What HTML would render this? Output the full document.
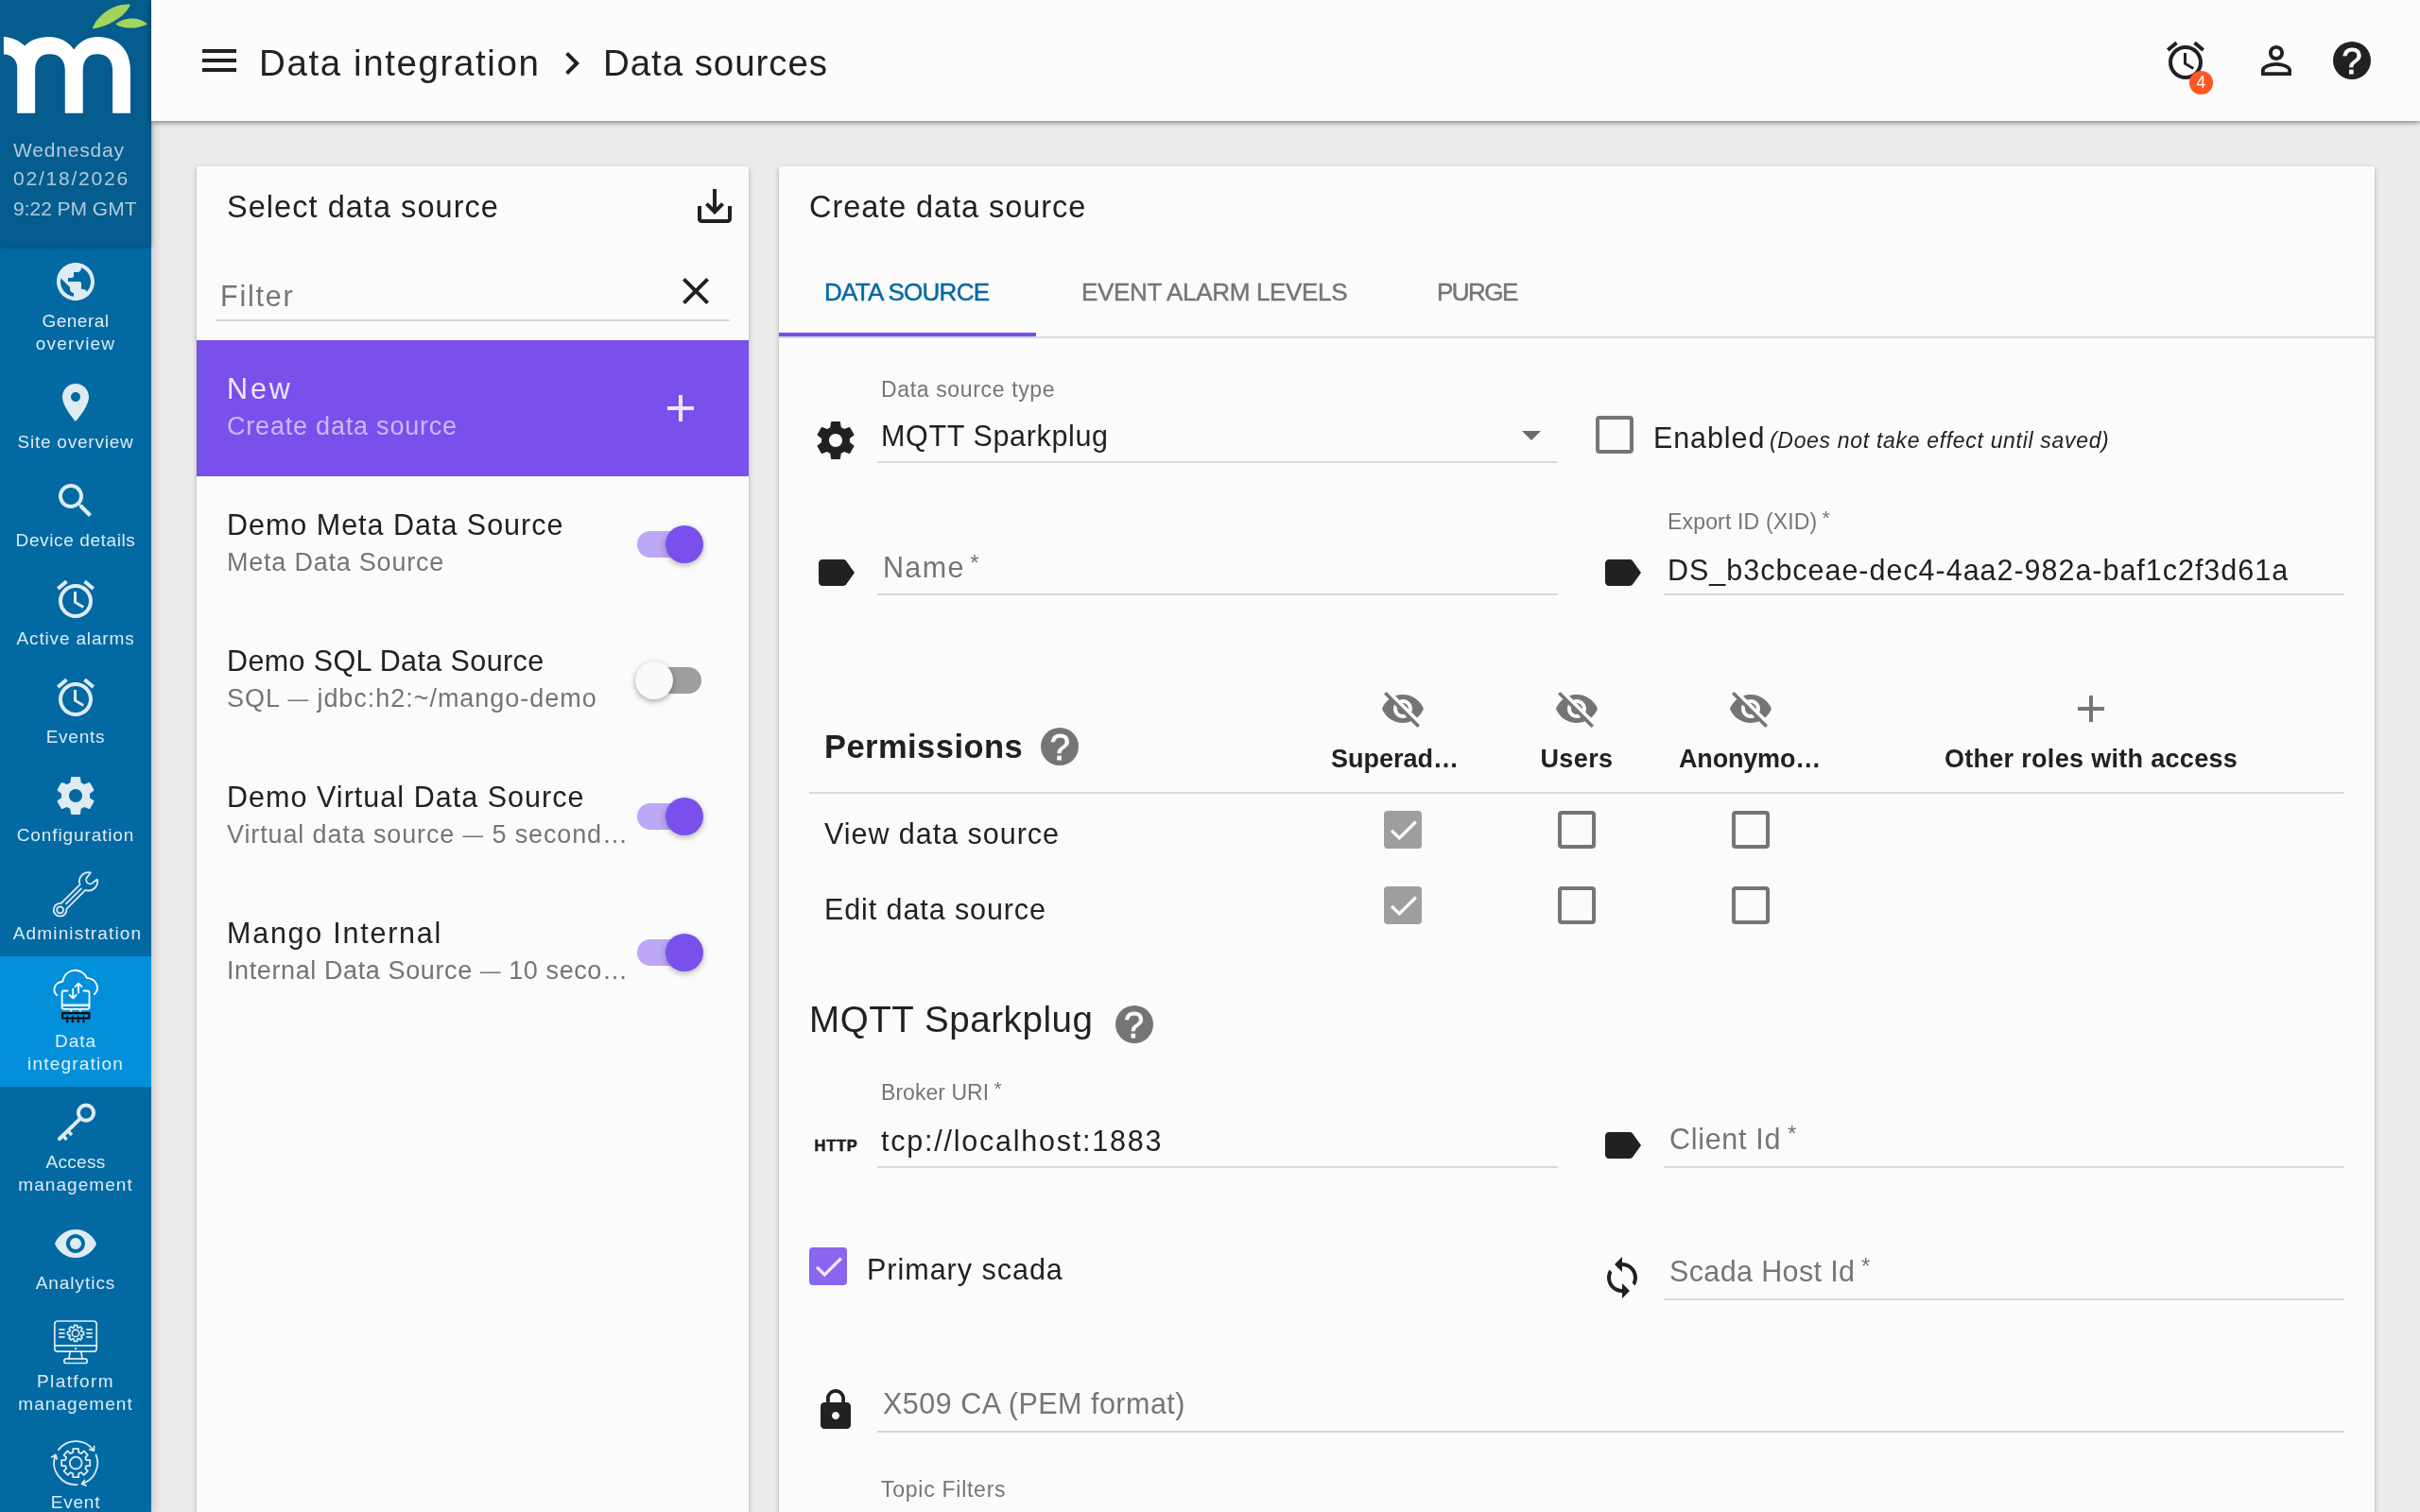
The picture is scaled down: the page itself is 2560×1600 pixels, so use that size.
<!DOCTYPE html>
<html lang="en"><head><meta charset="utf-8"><title>Data sources</title>
<style>
html,body{margin:0;padding:0;background:#ebebeb;}
body{width:2560px;height:1600px;overflow:hidden;position:relative;}
#root{position:absolute;left:0;top:0;width:2560px;height:1600px;overflow:hidden;background:#ebebeb;}
#tx{position:absolute;left:0;top:0;width:2560px;height:1600px;will-change:transform;}
.a{position:absolute;display:block;}
.t{position:absolute;white-space:nowrap;display:block;}
.tc{position:absolute;width:800px;text-align:center;white-space:nowrap;}
.tr{position:absolute;width:800px;text-align:right;white-space:nowrap;}
.tc>span,.tr>span{display:inline-block;}
.d{font-size:80%;position:relative;top:-1.5px;}
</style></head>
<body><div id="root">
<div class="a" style="left:208px;top:176px;width:584px;height:1500px;background:#fbfbfb;box-shadow:0 2px 6px rgba(0,0,0,.2),0 2px 2px rgba(0,0,0,.14),0 4px 2px -2px rgba(0,0,0,.12);"></div>
<div class="a" style="left:824px;top:176px;width:1688px;height:1500px;background:#fbfbfb;box-shadow:0 2px 6px rgba(0,0,0,.2),0 2px 2px rgba(0,0,0,.14),0 4px 2px -2px rgba(0,0,0,.12);"></div>
<svg class="a" style="left:732.0px;top:194.0px;" width="48" height="48" viewBox="0 0 24 24"><path fill="#212121" d="M19 12v7H5v-7H3v7c0 1.1.9 2 2 2h14c1.1 0 2-.9 2-2v-7h-2zm-6 .67l2.59-2.58L17 11.5l-5 5-5-5 1.41-1.41L11 12.67V3h2z"/></svg>
<div class="a" style="left:228px;top:338px;width:544px;height:2px;background:#d9d9d9;"></div>
<svg class="a" style="left:711.5px;top:284.0px;" width="48" height="48" viewBox="0 0 24 24"><path fill="#212121" d="M19 6.41L17.59 5 12 10.59 6.41 5 5 6.41 10.59 12 5 17.59 6.41 19 12 13.41 17.59 19 19 17.59 13.41 12z"/></svg>
<div class="a" style="left:208px;top:360px;width:584px;height:144px;background:#7950ec;"></div>
<svg class="a" style="left:696.0px;top:408.0px;" width="48" height="48" viewBox="0 0 24 24"><path fill="rgba(255,255,255,0.87)" d="M19 13h-6v6h-2v-6H5v-2h6V5h2v6h6v2z"/></svg>
<div class="a" style="left:674px;top:562px;width:68px;height:28px;background:#bca8f5;border-radius:14px;"></div>
<div class="a" style="left:704px;top:556px;width:40px;height:40px;background:#7950ec;border-radius:50%;box-shadow:0 2px 6px rgba(0,0,0,.3);"></div>
<div class="a" style="left:674px;top:706px;width:68px;height:28px;background:#9e9e9e;border-radius:14px;"></div>
<div class="a" style="left:672px;top:700px;width:40px;height:40px;background:#fafafa;border-radius:50%;box-shadow:0 2px 6px rgba(0,0,0,.35);"></div>
<div class="a" style="left:674px;top:850px;width:68px;height:28px;background:#bca8f5;border-radius:14px;"></div>
<div class="a" style="left:704px;top:844px;width:40px;height:40px;background:#7950ec;border-radius:50%;box-shadow:0 2px 6px rgba(0,0,0,.3);"></div>
<div class="a" style="left:674px;top:994px;width:68px;height:28px;background:#bca8f5;border-radius:14px;"></div>
<div class="a" style="left:704px;top:988px;width:40px;height:40px;background:#7950ec;border-radius:50%;box-shadow:0 2px 6px rgba(0,0,0,.3);"></div>
<div class="a" style="left:824px;top:356px;width:1688px;height:2px;background:#d9d9d9;"></div>
<div class="a" style="left:824px;top:352px;width:272px;height:4px;background:#7950ec;"></div>
<svg class="a" style="left:860.0px;top:441.5px;" width="48" height="48" viewBox="0 0 24 24"><path fill="#212121" d="M19.43 12.98c.04-.32.07-.64.07-.98s-.03-.66-.07-.98l2.11-1.65c.19-.15.24-.42.12-.64l-2-3.46c-.12-.22-.39-.3-.61-.22l-2.49 1c-.52-.4-1.08-.73-1.69-.98l-.38-2.65C14.46 2.18 14.25 2 14 2h-4c-.25 0-.46.18-.49.42l-.38 2.65c-.61.25-1.17.59-1.69.98l-2.49-1c-.23-.09-.49 0-.61.22l-2 3.46c-.13.22-.07.49.12.64l2.11 1.65c-.04.32-.07.65-.07.98s.03.66.07.98l-2.11 1.65c-.19.15-.24.42-.12.64l2 3.46c.12.22.39.3.61.22l2.49-1c.52.4 1.08.73 1.69.98l.38 2.65c.03.24.24.42.49.42h4c.25 0 .46-.18.49-.42l.38-2.65c.61-.25 1.17-.59 1.69-.98l2.49 1c.23.09.49 0 .61-.22l2-3.46c.12-.22.07-.49-.12-.64l-2.11-1.65zM12 15.5c-1.93 0-3.5-1.57-3.5-3.5s1.57-3.5 3.5-3.5 3.5 1.57 3.5 3.5-1.57 3.5-3.5 3.5z"/></svg>
<div class="a" style="left:928px;top:488px;width:720px;height:2px;background:#d9d9d9;"></div>
<svg class="a" style="left:1610px;top:456px" width="20" height="10" viewBox="0 0 20 10"><path d="M0 0h20L10 10z" fill="#6b6b6b"/></svg>
<div class="a" style="left:1688px;top:440px;width:40px;height:40px;box-sizing:border-box;border:4px solid #757575;border-radius:4px;"></div>
<svg class="a" style="left:860.0px;top:582.0px;" width="48" height="48" viewBox="0 0 24 24"><path fill="#212121" d="M17.63 5.84C17.27 5.33 16.67 5 16 5L5 5.01C3.9 5.01 3 5.9 3 7v10c0 1.1.9 1.99 2 1.99L16 19c.67 0 1.27-.33 1.63-.84L22 12l-4.37-6.16z"/></svg>
<div class="a" style="left:928px;top:628px;width:720px;height:2px;background:#d9d9d9;"></div>
<svg class="a" style="left:1692.0px;top:582.0px;" width="48" height="48" viewBox="0 0 24 24"><path fill="#212121" d="M17.63 5.84C17.27 5.33 16.67 5 16 5L5 5.01C3.9 5.01 3 5.9 3 7v10c0 1.1.9 1.99 2 1.99L16 19c.67 0 1.27-.33 1.63-.84L22 12l-4.37-6.16z"/></svg>
<div class="a" style="left:1760px;top:628px;width:720px;height:2px;background:#d9d9d9;"></div>
<div class="a" style="left:1101.3px;top:770px;width:40px;height:40px;background:#757575;border-radius:50%;"></div>
<svg class="a" style="left:1460.0px;top:726.0px;" width="48" height="48" viewBox="0 0 24 24"><path fill="#757575" d="M12 7c2.76 0 5 2.24 5 5 0 .65-.13 1.26-.36 1.83l2.92 2.92c1.51-1.26 2.7-2.89 3.43-4.75-1.73-4.39-6-7.5-11-7.5-1.4 0-2.74.25-3.98.7l2.16 2.16C10.74 7.13 11.35 7 12 7zM2 4.27l2.28 2.28.46.46C3.08 8.3 1.78 10.02 1 12c1.73 4.39 6 7.5 11 7.5 1.55 0 3.03-.3 4.38-.84l.42.42L19.73 22 21 20.73 3.27 3 2 4.27zM7.53 9.8l1.55 1.55c-.05.21-.08.43-.08.65 0 1.66 1.34 3 3 3 .22 0 .44-.03.65-.08l1.55 1.55c-.67.33-1.41.53-2.2.53-2.76 0-5-2.24-5-5 0-.79.2-1.53.53-2.2zm4.31-.78l3.15 3.15.02-.16c0-1.66-1.34-3-3-3l-.17.01z"/></svg>
<svg class="a" style="left:1644.0px;top:726.0px;" width="48" height="48" viewBox="0 0 24 24"><path fill="#757575" d="M12 7c2.76 0 5 2.24 5 5 0 .65-.13 1.26-.36 1.83l2.92 2.92c1.51-1.26 2.7-2.89 3.43-4.75-1.73-4.39-6-7.5-11-7.5-1.4 0-2.74.25-3.98.7l2.16 2.16C10.74 7.13 11.35 7 12 7zM2 4.27l2.28 2.28.46.46C3.08 8.3 1.78 10.02 1 12c1.73 4.39 6 7.5 11 7.5 1.55 0 3.03-.3 4.38-.84l.42.42L19.73 22 21 20.73 3.27 3 2 4.27zM7.53 9.8l1.55 1.55c-.05.21-.08.43-.08.65 0 1.66 1.34 3 3 3 .22 0 .44-.03.65-.08l1.55 1.55c-.67.33-1.41.53-2.2.53-2.76 0-5-2.24-5-5 0-.79.2-1.53.53-2.2zm4.31-.78l3.15 3.15.02-.16c0-1.66-1.34-3-3-3l-.17.01z"/></svg>
<svg class="a" style="left:1828.0px;top:726.0px;" width="48" height="48" viewBox="0 0 24 24"><path fill="#757575" d="M12 7c2.76 0 5 2.24 5 5 0 .65-.13 1.26-.36 1.83l2.92 2.92c1.51-1.26 2.7-2.89 3.43-4.75-1.73-4.39-6-7.5-11-7.5-1.4 0-2.74.25-3.98.7l2.16 2.16C10.74 7.13 11.35 7 12 7zM2 4.27l2.28 2.28.46.46C3.08 8.3 1.78 10.02 1 12c1.73 4.39 6 7.5 11 7.5 1.55 0 3.03-.3 4.38-.84l.42.42L19.73 22 21 20.73 3.27 3 2 4.27zM7.53 9.8l1.55 1.55c-.05.21-.08.43-.08.65 0 1.66 1.34 3 3 3 .22 0 .44-.03.65-.08l1.55 1.55c-.67.33-1.41.53-2.2.53-2.76 0-5-2.24-5-5 0-.79.2-1.53.53-2.2zm4.31-.78l3.15 3.15.02-.16c0-1.66-1.34-3-3-3l-.17.01z"/></svg>
<svg class="a" style="left:2188.0px;top:726.0px;" width="48" height="48" viewBox="0 0 24 24"><path fill="#757575" d="M19 13h-6v6h-2v-6H5v-2h6V5h2v6h6v2z"/></svg>
<div class="a" style="left:856px;top:838px;width:1624px;height:2px;background:#d9d9d9;"></div>
<div class="a" style="left:1464px;top:858px;width:40px;height:40px;background:#9e9e9e;border-radius:4px;"></div>
<svg class="a" style="left:1464px;top:858px" width="40" height="40" viewBox="0 0 40 40"><path d="M8.1 20.8L16.3 29L33.8 11.5" fill="none" stroke="#fbfbfb" stroke-width="3.3" stroke-linejoin="miter"/></svg>
<div class="a" style="left:1648px;top:858px;width:40px;height:40px;box-sizing:border-box;border:4px solid #757575;border-radius:4px;"></div>
<div class="a" style="left:1832px;top:858px;width:40px;height:40px;box-sizing:border-box;border:4px solid #757575;border-radius:4px;"></div>
<div class="a" style="left:1464px;top:938px;width:40px;height:40px;background:#9e9e9e;border-radius:4px;"></div>
<svg class="a" style="left:1464px;top:938px" width="40" height="40" viewBox="0 0 40 40"><path d="M8.1 20.8L16.3 29L33.8 11.5" fill="none" stroke="#fbfbfb" stroke-width="3.3" stroke-linejoin="miter"/></svg>
<div class="a" style="left:1648px;top:938px;width:40px;height:40px;box-sizing:border-box;border:4px solid #757575;border-radius:4px;"></div>
<div class="a" style="left:1832px;top:938px;width:40px;height:40px;box-sizing:border-box;border:4px solid #757575;border-radius:4px;"></div>
<div class="a" style="left:1179.5px;top:1064px;width:40px;height:40px;background:#757575;border-radius:50%;"></div>
<div class="a" style="left:928px;top:1234px;width:720px;height:2px;background:#d9d9d9;"></div>
<svg class="a" style="left:1692.0px;top:1188.0px;" width="48" height="48" viewBox="0 0 24 24"><path fill="#212121" d="M17.63 5.84C17.27 5.33 16.67 5 16 5L5 5.01C3.9 5.01 3 5.9 3 7v10c0 1.1.9 1.99 2 1.99L16 19c.67 0 1.27-.33 1.63-.84L22 12l-4.37-6.16z"/></svg>
<div class="a" style="left:1760px;top:1234px;width:720px;height:2px;background:#d9d9d9;"></div>
<div class="a" style="left:856px;top:1320px;width:40px;height:40px;background:#8a66ee;border-radius:4px;"></div>
<svg class="a" style="left:856px;top:1320px" width="40" height="40" viewBox="0 0 40 40"><path d="M8.1 20.8L16.3 29L33.8 11.5" fill="none" stroke="#ede6fc" stroke-width="3.3" stroke-linejoin="miter"/></svg>
<svg class="a" style="left:1692.0px;top:1328.0px;" width="48" height="48" viewBox="0 0 24 24"><path fill="#212121" d="M12 4V1L8 5l4 4V6c3.31 0 6 2.69 6 6 0 1.01-.25 1.97-.7 2.8l1.46 1.46C19.54 15.03 20 13.57 20 12c0-4.42-3.58-8-8-8zm0 14c-3.31 0-6-2.69-6-6 0-1.01.25-1.97.7-2.8L5.24 7.74C4.46 8.97 4 10.43 4 12c0 4.42 3.58 8 8 8v3l4-4-4-4v3z"/></svg>
<div class="a" style="left:1760px;top:1374px;width:720px;height:2px;background:#d9d9d9;"></div>
<svg class="a" style="left:860.0px;top:1468.0px;" width="48" height="48" viewBox="0 0 24 24"><path fill="#212121" d="M18 8h-1V6c0-2.76-2.24-5-5-5S7 3.24 7 6v2H6c-1.1 0-2 .9-2 2v10c0 1.1.9 2 2 2h12c1.1 0 2-.9 2-2V10c0-1.1-.9-2-2-2zm-6 9c-1.1 0-2-.9-2-2s.9-2 2-2 2 .9 2 2-.9 2-2 2zm3.1-9H8.9V6c0-1.71 1.39-3.1 3.1-3.1 1.71 0 3.1 1.39 3.1 3.1v2z"/></svg>
<div class="a" style="left:928px;top:1514px;width:1552px;height:2px;background:#d9d9d9;"></div>
<div class="a" style="left:0px;top:0px;width:160px;height:1600px;background:#0269a3;box-shadow:0 0 10px rgba(0,0,0,.25);"></div>
<div class="a" style="left:0px;top:1012px;width:160px;height:138px;background:#0390da;"></div>
<div class="a" style="left:0px;top:0px;width:160px;height:260px;background:#055c8e;box-shadow:0 1px 4px rgba(0,0,0,.3);"></div>
<svg class="a" style="left:0;top:0" width="160" height="130" viewBox="0 0 160 130">
<path fill="#fff" d="M3.9 39.1C13 39.5 21 43.5 26.2 48.6C32 42.5 41 39.1 51.6 39.1C63 39.1 72.5 44 78.2 52.5C84 44 93 39.1 103.2 39.1C125 39.1 138 53 138 75L138 119.7L119.1 119.7L119.1 75C119.1 63 113 57.2 102.8 57.2C93 57.2 87.7 63 87.7 75L87.7 119.7L68.8 119.7L68.8 75C68.8 63 63 57.2 52.5 57.2C42.5 57.2 37.1 63 37.1 75L37.1 119.7L18.2 119.7L18.2 72C18.2 63 12 57.8 3.9 57.6Z"/>
<path fill="#a4d45d" d="M97.6 30.5C103 16 120 3.5 138 4.7C133 17 115 28 97.6 30.5Z"/>
<path fill="#a4d45d" d="M122.1 25.4C131 18.5 146 16.5 156 25.4C146 30.5 132 31.5 122.1 25.4Z"/>
</svg>
<svg class="a" style="left:56.0px;top:274.0px;" width="48" height="48" viewBox="0 0 24 24"><path fill="rgba(255,255,255,0.87)" d="M12 2C6.48 2 2 6.48 2 12s4.48 10 10 10 10-4.48 10-10S17.52 2 12 2zm-1 17.93c-3.95-.49-7-3.85-7-7.93 0-.62.08-1.21.21-1.79L9 15v1c0 1.1.9 2 2 2v1.93zm6.9-2.54c-.26-.81-1-1.39-1.9-1.39h-1v-3c0-.55-.45-1-1-1H8v-2h2c.55 0 1-.45 1-1V7h2c1.1 0 2-.9 2-2v-.41c2.93 1.19 5 4.06 5 7.41 0 2.08-.8 3.97-2.1 5.39z"/></svg>
<svg class="a" style="left:56.0px;top:402.0px;" width="48" height="48" viewBox="0 0 24 24"><path fill="rgba(255,255,255,0.87)" d="M12 2C8.13 2 5 5.13 5 9c0 5.25 7 13 7 13s7-7.75 7-13c0-3.87-3.13-7-7-7zm0 9.5c-1.38 0-2.5-1.12-2.5-2.5s1.12-2.5 2.5-2.5 2.5 1.12 2.5 2.5-1.12 2.5-2.5 2.5z"/></svg>
<svg class="a" style="left:56.0px;top:506.0px;" width="48" height="48" viewBox="0 0 24 24"><path fill="rgba(255,255,255,0.87)" d="M15.5 14h-.79l-.28-.27C15.41 12.59 16 11.11 16 9.5 16 5.91 13.09 3 9.5 3S3 5.91 3 9.5 5.91 16 9.5 16c1.61 0 3.09-.59 4.23-1.57l.27.28v.79l5 4.99L20.49 19l-4.99-5zm-6 0C7.01 14 5 11.99 5 9.5S7.01 5 9.5 5 14 7.01 14 9.5 11.99 14 9.5 14z"/></svg>
<svg class="a" style="left:56.0px;top:610.0px;" width="48" height="48" viewBox="0 0 24 24"><path fill="rgba(255,255,255,0.87)" d="M22 5.72l-4.6-3.86-1.29 1.53 4.6 3.86L22 5.72zM7.88 3.39L6.6 1.86 2 5.71l1.29 1.53 4.59-3.85zM12.5 8H11v6l4.75 2.85.75-1.23-4-2.37V8zM12 4c-4.97 0-9 4.03-9 9s4.02 9 9 9c4.97 0 9-4.03 9-9s-4.03-9-9-9zm0 16c-3.87 0-7-3.13-7-7s3.13-7 7-7 7 3.13 7 7-3.13 7-7 7z"/></svg>
<svg class="a" style="left:56.0px;top:714.0px;" width="48" height="48" viewBox="0 0 24 24"><path fill="rgba(255,255,255,0.87)" d="M22 5.72l-4.6-3.86-1.29 1.53 4.6 3.86L22 5.72zM7.88 3.39L6.6 1.86 2 5.71l1.29 1.53 4.59-3.85zM12.5 8H11v6l4.75 2.85.75-1.23-4-2.37V8zM12 4c-4.97 0-9 4.03-9 9s4.02 9 9 9c4.97 0 9-4.03 9-9s-4.03-9-9-9zm0 16c-3.87 0-7-3.13-7-7s3.13-7 7-7 7 3.13 7 7-3.13 7-7 7z"/></svg>
<svg class="a" style="left:56.0px;top:818.0px;" width="48" height="48" viewBox="0 0 24 24"><path fill="rgba(255,255,255,0.87)" d="M19.43 12.98c.04-.32.07-.64.07-.98s-.03-.66-.07-.98l2.11-1.65c.19-.15.24-.42.12-.64l-2-3.46c-.12-.22-.39-.3-.61-.22l-2.49 1c-.52-.4-1.08-.73-1.69-.98l-.38-2.65C14.46 2.18 14.25 2 14 2h-4c-.25 0-.46.18-.49.42l-.38 2.65c-.61.25-1.17.59-1.69.98l-2.49-1c-.23-.09-.49 0-.61.22l-2 3.46c-.13.22-.07.49.12.64l2.11 1.65c-.04.32-.07.65-.07.98s.03.66.07.98l-2.11 1.65c-.19.15-.24.42-.12.64l2 3.46c.12.22.39.3.61.22l2.49-1c.52.4 1.08.73 1.69.98l.38 2.65c.03.24.24.42.49.42h4c.25 0 .46-.18.49-.42l.38-2.65c.61-.25 1.17-.59 1.69-.98l2.49 1c.23.09.49 0 .61-.22l2-3.46c.12-.22.07-.49-.12-.64l-2.11-1.65zM12 15.5c-1.93 0-3.5-1.57-3.5-3.5s1.57-3.5 3.5-3.5 3.5 1.57 3.5 3.5-1.57 3.5-3.5 3.5z"/></svg>
<svg class="a" style="left:56.0px;top:1292.0px;" width="48" height="48" viewBox="0 0 24 24"><path fill="rgba(255,255,255,0.87)" d="M12 4.5C7 4.5 2.73 7.61 1 12c1.73 4.39 6 7.5 11 7.5s9.27-3.11 11-7.5c-1.73-4.39-6-7.5-11-7.5zM12 17c-2.76 0-5-2.24-5-5s2.24-5 5-5 5 2.24 5 5-2.24 5-5 5zm0-8c-1.66 0-3 1.34-3 3s1.34 3 3 3 3-1.34 3-3-1.34-3-3-3z"/></svg>
<svg class="a" style="left:0;top:900px" width="160" height="100" viewBox="0 900 160 100"><g transform="translate(63.6 962.8) rotate(-45)" fill="none" stroke="rgba(255,255,255,0.87)" stroke-width="1.8" stroke-linejoin="round" stroke-linecap="round"><path d="M50.599999999999994 -5 A9.6 9.6 0 0 0 33.7 -4.1 L5.55 -4.1 A6.9 6.9 0 1 0 5.55 4.1 L33.7 4.1 A9.6 9.6 0 0 0 50.599999999999994 5 L44.9 4.2 A4.2 4.2 0 0 1 44.9 -4.2 Z"/><circle r="3.5"/><path d="M9 0L31.6 0"/></g></svg>
<svg class="a" style="left:40px;top:1016px" width="80" height="76" viewBox="0 0 80 76"><g fill="none" stroke="#fff" stroke-width="1.8" stroke-linecap="round" stroke-linejoin="round">
<path d="M20.1 37.2C15.5 33 16.5 24 26.3 22.6C29 7.5 47 7.5 51.8 18.8C62 19.5 66.5 30 59.8 36"/>
<path d="M31.5 32.5H27.5A2 2 0 0 0 25.6 34.5V49.8A2 2 0 0 0 27.6 51.8H52.5A2 2 0 0 0 54.5 49.8V34.5A2 2 0 0 0 52.5 32.5H48.4"/>
<path d="M26 47.8H54" stroke-width="2.4"/>
<path d="M37.2 30.4V40M33.8 37L37.2 40.4L40.6 37M43 34.6V25M39.6 28L43 24.6L46.4 28"/>
<path d="M36.2 52L34.8 54.2M43.8 52L45.2 54.2" stroke-width="1.4"/>
</g><g fill="none" stroke="#0b0b0b" stroke-width="2.2" stroke-linejoin="round">
<rect x="26.1" y="56.1" width="28.3" height="5.4"/>
<path d="M31.2 58.5V63.5M36.9 58.5V63.5M42.7 58.5V63.5M48.5 58.5V63.5" stroke-width="1.2"/>
</g><g fill="#0b0b0b"><circle cx="31.2" cy="64.8" r="1.5"/><circle cx="36.9" cy="64.8" r="1.5"/><circle cx="42.7" cy="64.8" r="1.5"/><circle cx="48.5" cy="64.8" r="1.5"/></g></svg>
<svg class="a" style="left:40px;top:1156px" width="80" height="60" viewBox="0 0 80 60"><g fill="none" stroke="#deebf3" stroke-width="4" stroke-linecap="round">
<circle cx="51" cy="21.6" r="8.1"/><path d="M45.2 27.4L22.8 49.2"/><path d="M32.5 41.5L36 45M27.3 46.6L30.6 50" stroke-width="3.4" stroke-linecap="butt"/></g></svg>
<svg class="a" style="left:40px;top:1386px" width="80" height="66" viewBox="0 0 80 66"><g fill="none" stroke="rgba(255,255,255,0.87)" stroke-width="1.7" stroke-linecap="round" stroke-linejoin="round">
<rect x="17.8" y="12" width="44.4" height="32.2" rx="3.2"/>
<path d="M18 37.8H62"/>
<path d="M34.2 44.4L32.9 51.6M45.8 44.4L47.1 51.6"/>
<rect x="27.8" y="51.8" width="24.4" height="4.7" rx="2.35"/>
<path d="M22.2 20.9H28.6M22.2 24.9H28.6M22.2 28.9H28.6M51.3 20.9H57.7M51.3 24.9H57.7M51.3 28.9H57.7" stroke-width="1.9" stroke-linecap="butt"/>
<circle cx="40" cy="24.9" r="3.7"/>
<path d="M38.10 18.68 L38.51 16.43 L41.49 16.43 L41.90 18.68 L43.05 19.16 L44.93 17.86 L47.04 19.97 L45.74 21.85 L46.22 23.00 L48.47 23.41 L48.47 26.39 L46.22 26.80 L45.74 27.95 L47.04 29.83 L44.93 31.94 L43.05 30.64 L41.90 31.12 L41.49 33.37 L38.51 33.37 L38.10 31.12 L36.95 30.64 L35.07 31.94 L32.96 29.83 L34.26 27.95 L33.78 26.80 L31.53 26.39 L31.53 23.41 L33.78 23.00 L34.26 21.85 L32.96 19.97 L35.07 17.86 L36.95 19.16Z"/>
</g><rect x="39" y="40" width="2" height="2" fill="rgba(255,255,255,0.87)"/></svg>
<svg class="a" style="left:40px;top:1514px" width="80" height="66" viewBox="0 0 80 66"><g fill="none" stroke="rgba(255,255,255,0.87)" stroke-width="1.8" stroke-linecap="round" stroke-linejoin="round">
<circle cx="40.2" cy="34.1" r="6.4"/>
<path d="M37.20 22.90 L37.28 19.08 L43.12 19.08 L43.20 22.90 L46.00 24.05 L48.76 21.42 L52.88 25.54 L50.25 28.30 L51.40 31.10 L55.22 31.18 L55.22 37.02 L51.40 37.10 L50.25 39.90 L52.88 42.66 L48.76 46.78 L46.00 44.15 L43.20 45.30 L43.12 49.12 L37.28 49.12 L37.20 45.30 L34.40 44.15 L31.64 46.78 L27.52 42.66 L30.15 39.90 L29.00 37.10 L25.18 37.02 L25.18 31.18 L29.00 31.10 L30.15 28.30 L27.52 25.54 L31.64 21.42 L34.40 24.05Z"/>
<path d="M21.90 20.16 A23 23 0 0 1 59.27 21.24 M59.27 21.24 L59.59 16.65 M59.27 21.24 L54.89 19.82 M61.53 25.48 A23 23 0 0 1 46.54 56.21 M46.54 56.21 L50.80 57.93 M46.54 56.21 L49.24 52.49 M41.80 57.04 A23 23 0 0 1 18.87 25.48 M18.87 25.48 L14.89 27.78 M18.87 25.48 L20.14 29.91"/>
</g></svg>
<div class="a" style="left:160px;top:0px;width:2400px;height:128px;background:#fcfcfc;box-shadow:0 1px 6px rgba(0,0,0,.55);"></div>
<svg class="a" style="left:208.0px;top:40.0px;" width="48" height="48" viewBox="0 0 24 24"><path fill="#212121" d="M3 18h18v-2H3v2zm0-5h18v-2H3v2zm0-7v2h18V6H3z"/></svg>
<svg class="a" style="left:581.0px;top:43.0px;" width="48" height="48" viewBox="0 0 24 24"><path fill="#212121" d="M10 6L8.59 7.41 13.17 12l-4.58 4.59L10 18l6-6z"/></svg>
<svg class="a" style="left:2288.0px;top:40.0px;" width="48" height="48" viewBox="0 0 24 24"><path fill="#212121" d="M22 5.72l-4.6-3.86-1.29 1.53 4.6 3.86L22 5.72zM7.88 3.39L6.6 1.86 2 5.71l1.29 1.53 4.59-3.85zM12.5 8H11v6l4.75 2.85.75-1.23-4-2.37V8zM12 4c-4.97 0-9 4.03-9 9s4.02 9 9 9c4.97 0 9-4.03 9-9s-4.03-9-9-9zm0 16c-3.87 0-7-3.13-7-7s3.13-7 7-7 7 3.13 7 7-3.13 7-7 7z"/></svg>
<div class="a" style="left:2316px;top:75px;width:24.5px;height:24.5px;background:#ff5722;border-radius:50%;"></div>
<svg class="a" style="left:2384.0px;top:40.0px;" width="48" height="48" viewBox="0 0 24 24"><path fill="#212121" d="M12 5.9c1.16 0 2.1.94 2.1 2.1s-.94 2.1-2.1 2.1S9.9 9.16 9.9 8s.94-2.1 2.1-2.1m0 9c2.97 0 6.1 1.46 6.1 2.1v1.1H5.9V17c0-.64 3.13-2.1 6.1-2.1M12 4C9.79 4 8 5.79 8 8s1.79 4 4 4 4-1.79 4-4-1.79-4-4-4zm0 9c-2.67 0-8 1.34-8 4v3h16v-3c0-2.66-5.33-4-8-4z"/></svg>
<div class="a" style="left:2468px;top:44px;width:40px;height:40px;background:#212121;border-radius:50%;"></div>
<div id="tx">
<span class="t" id="t1" style="left:240px;top:197.50px;font-family:'Liberation Sans',sans-serif;font-size:32.5px;line-height:43px;color:#212121;font-weight:400;letter-spacing:1.039px;">Select data source</span>
<span class="t" id="t2" style="left:233px;top:293.00px;font-family:'Liberation Sans',sans-serif;font-size:30.5px;line-height:40px;color:#757575;font-weight:400;letter-spacing:1.781px;">Filter</span>
<span class="t" id="t3" style="left:240px;top:391.00px;font-family:'Liberation Sans',sans-serif;font-size:30.5px;line-height:40px;color:rgba(255,255,255,0.87);font-weight:400;letter-spacing:2.871px;">New</span>
<span class="t" id="t4" style="left:240px;top:433.00px;font-family:'Liberation Sans',sans-serif;font-size:27.0px;line-height:36px;color:rgba(255,255,255,0.6);font-weight:400;letter-spacing:0.792px;">Create data source</span>
<span class="t" id="t5" style="left:240px;top:535.00px;font-family:'Liberation Sans',sans-serif;font-size:30.5px;line-height:40px;color:#212121;font-weight:400;letter-spacing:0.987px;">Demo Meta Data Source</span>
<span class="t" id="t6" style="left:240px;top:577.00px;font-family:'Liberation Sans',sans-serif;font-size:27.0px;line-height:36px;color:#757575;font-weight:400;letter-spacing:0.777px;">Meta Data Source</span>
<span class="t" id="t7" style="left:240px;top:679.00px;font-family:'Liberation Sans',sans-serif;font-size:30.5px;line-height:40px;color:#212121;font-weight:400;letter-spacing:0.389px;">Demo SQL Data Source</span>
<span class="t" id="t8" style="left:240px;top:721.00px;font-family:'Liberation Sans',sans-serif;font-size:27.0px;line-height:36px;color:#757575;font-weight:400;letter-spacing:0.965px;">SQL <span class="d">—</span> jdbc:h2:~/mango-demo</span>
<span class="t" id="t9" style="left:240px;top:823.00px;font-family:'Liberation Sans',sans-serif;font-size:30.5px;line-height:40px;color:#212121;font-weight:400;letter-spacing:1.034px;">Demo Virtual Data Source</span>
<span class="t" id="t10" style="left:240px;top:865.00px;font-family:'Liberation Sans',sans-serif;font-size:27.0px;line-height:36px;color:#757575;font-weight:400;letter-spacing:0.872px;">Virtual data source <span class="d">—</span> 5 second…</span>
<span class="t" id="t11" style="left:240px;top:967.00px;font-family:'Liberation Sans',sans-serif;font-size:30.5px;line-height:40px;color:#212121;font-weight:400;letter-spacing:1.754px;">Mango Internal</span>
<span class="t" id="t12" style="left:240px;top:1009.00px;font-family:'Liberation Sans',sans-serif;font-size:27.0px;line-height:36px;color:#757575;font-weight:400;letter-spacing:0.606px;">Internal Data Source <span class="d">—</span> 10 seco…</span>
<span class="t" id="t13" style="left:856px;top:197.50px;font-family:'Liberation Sans',sans-serif;font-size:32.5px;line-height:43px;color:#212121;font-weight:400;letter-spacing:0.934px;">Create data source</span>
<span class="t" id="t14" style="left:872px;top:291.50px;font-family:'Liberation Sans',sans-serif;font-size:26.0px;line-height:34px;color:#0269a3;font-weight:500;letter-spacing:-0.750px;-webkit-text-stroke:0.45px #0269a3;">DATA SOURCE</span>
<span class="t" id="t15" style="left:1144px;top:291.50px;font-family:'Liberation Sans',sans-serif;font-size:26.0px;line-height:34px;color:#757575;font-weight:500;letter-spacing:-0.325px;-webkit-text-stroke:0.45px #757575;">EVENT ALARM LEVELS</span>
<span class="t" id="t16" style="left:1520px;top:291.50px;font-family:'Liberation Sans',sans-serif;font-size:26.0px;line-height:34px;color:#757575;font-weight:500;letter-spacing:-1.539px;-webkit-text-stroke:0.45px #757575;">PURGE</span>
<span class="t" id="t17" style="left:932px;top:397.00px;font-family:'Liberation Sans',sans-serif;font-size:23.0px;line-height:30px;color:#757575;font-weight:400;letter-spacing:0.649px;">Data source type</span>
<span class="t" id="t18" style="left:932px;top:440.50px;font-family:'Liberation Sans',sans-serif;font-size:30.5px;line-height:40px;color:#212121;font-weight:400;letter-spacing:0.639px;">MQTT Sparkplug</span>
<span class="t" id="t19" style="left:1749px;top:443.00px;font-family:'Liberation Sans',sans-serif;font-size:30.5px;line-height:40px;color:#212121;font-weight:400;letter-spacing:0.904px;">Enabled</span>
<span class="t" id="t20" style="left:1872px;top:451.00px;font-family:'Liberation Sans',sans-serif;font-size:23.0px;line-height:30px;color:#212121;font-weight:400;letter-spacing:0.683px;font-style:italic;">(Does not take effect until saved)</span>
<span class="t" id="t21" style="left:934px;top:580.00px;font-family:'Liberation Sans',sans-serif;font-size:30.5px;line-height:40px;color:#757575;font-weight:400;letter-spacing:1.333px;">Name</span>
<span class="t" id="t22" style="left:1026.3px;top:580.30px;font-family:'Liberation Sans',sans-serif;font-size:24.0px;line-height:32px;color:#757575;font-weight:400;letter-spacing:0.000px;">*</span>
<span class="t" id="t23" style="left:1764px;top:536.50px;font-family:'Liberation Sans',sans-serif;font-size:23.0px;line-height:30px;color:#757575;font-weight:400;letter-spacing:0.167px;">Export ID (XID)</span>
<span class="t" id="t24" style="left:1927.4px;top:534.00px;font-family:'Liberation Sans',sans-serif;font-size:21.0px;line-height:28px;color:#757575;font-weight:400;letter-spacing:0.000px;">*</span>
<span class="t" id="t25" style="left:1764px;top:582.50px;font-family:'Liberation Sans',sans-serif;font-size:30.5px;line-height:40px;color:#212121;font-weight:400;letter-spacing:0.978px;">DS_b3cbceae-dec4-4aa2-982a-baf1c2f3d61a</span>
<span class="t" id="t26" style="left:872px;top:767.50px;font-family:'Liberation Sans',sans-serif;font-size:34.5px;line-height:45px;color:#212121;font-weight:700;letter-spacing:0.445px;">Permissions</span>
<div class="tc" style="left:721.3px;top:765.20px;"><span id="t27" style="font-family:'Liberation Sans',sans-serif;font-size:38.5px;line-height:51px;color:#fbfbfb;font-weight:400;letter-spacing:0.000px;-webkit-text-stroke:0.8px #fbfbfb;">?</span></div>
<span class="t" id="t28" style="left:1408px;top:784.50px;font-family:'Liberation Sans',sans-serif;font-size:27.0px;line-height:36px;color:#212121;font-weight:700;letter-spacing:-0.013px;">Superad…</span>
<span class="t" id="t29" style="left:1776px;top:784.50px;font-family:'Liberation Sans',sans-serif;font-size:27.0px;line-height:36px;color:#212121;font-weight:700;letter-spacing:-0.174px;">Anonymo…</span>
<div class="tc" style="left:1268px;top:784.50px;"><span id="t30" style="font-family:'Liberation Sans',sans-serif;font-size:27.0px;line-height:36px;color:#212121;font-weight:700;letter-spacing:0.410px;">Users</span></div>
<div class="tc" style="left:1812px;top:784.50px;"><span id="t31" style="font-family:'Liberation Sans',sans-serif;font-size:27.0px;line-height:36px;color:#212121;font-weight:700;letter-spacing:0.308px;">Other roles with access</span></div>
<span class="t" id="t32" style="left:872px;top:862.00px;font-family:'Liberation Sans',sans-serif;font-size:30.5px;line-height:40px;color:#212121;font-weight:400;letter-spacing:0.968px;">View data source</span>
<span class="t" id="t33" style="left:872px;top:942.00px;font-family:'Liberation Sans',sans-serif;font-size:30.5px;line-height:40px;color:#212121;font-weight:400;letter-spacing:0.905px;">Edit data source</span>
<span class="t" id="t34" style="left:856px;top:1053.00px;font-family:'Liberation Sans',sans-serif;font-size:38.5px;line-height:51px;color:#212121;font-weight:400;letter-spacing:0.581px;">MQTT Sparkplug</span>
<div class="tc" style="left:799.5px;top:1059.20px;"><span id="t35" style="font-family:'Liberation Sans',sans-serif;font-size:38.5px;line-height:51px;color:#fbfbfb;font-weight:400;letter-spacing:0.000px;-webkit-text-stroke:0.8px #fbfbfb;">?</span></div>
<div class="tc" style="left:484.5px;top:1200.80px;"><span id="t36" style="font-family:'Liberation Sans',sans-serif;font-size:16.5px;line-height:22px;color:#212121;font-weight:700;letter-spacing:0.702px;-webkit-text-stroke:0.5px #212121;">HTTP</span></div>
<span class="t" id="t37" style="left:932px;top:1140.50px;font-family:'Liberation Sans',sans-serif;font-size:23.0px;line-height:30px;color:#757575;font-weight:400;letter-spacing:0.045px;">Broker URI</span>
<span class="t" id="t38" style="left:1051.5px;top:1138.20px;font-family:'Liberation Sans',sans-serif;font-size:21.0px;line-height:28px;color:#757575;font-weight:400;letter-spacing:0.000px;">*</span>
<span class="t" id="t39" style="left:932px;top:1186.50px;font-family:'Liberation Sans',sans-serif;font-size:30.5px;line-height:40px;color:#212121;font-weight:400;letter-spacing:1.774px;">tcp://localhost:1883</span>
<span class="t" id="t40" style="left:1766px;top:1184.50px;font-family:'Liberation Sans',sans-serif;font-size:30.5px;line-height:40px;color:#757575;font-weight:400;letter-spacing:0.703px;">Client Id</span>
<span class="t" id="t41" style="left:1890.9px;top:1184.00px;font-family:'Liberation Sans',sans-serif;font-size:24.0px;line-height:32px;color:#757575;font-weight:400;letter-spacing:0.000px;">*</span>
<span class="t" id="t42" style="left:917px;top:1322.50px;font-family:'Liberation Sans',sans-serif;font-size:30.5px;line-height:40px;color:#212121;font-weight:400;letter-spacing:0.992px;">Primary scada</span>
<span class="t" id="t43" style="left:1766px;top:1324.50px;font-family:'Liberation Sans',sans-serif;font-size:30.5px;line-height:40px;color:#757575;font-weight:400;letter-spacing:0.375px;">Scada Host Id</span>
<span class="t" id="t44" style="left:1969px;top:1324.20px;font-family:'Liberation Sans',sans-serif;font-size:24.0px;line-height:32px;color:#757575;font-weight:400;letter-spacing:0.000px;">*</span>
<span class="t" id="t45" style="left:934px;top:1464.50px;font-family:'Liberation Sans',sans-serif;font-size:30.5px;line-height:40px;color:#757575;font-weight:400;letter-spacing:0.488px;">X509 CA (PEM format)</span>
<span class="t" id="t46" style="left:932px;top:1560.50px;font-family:'Liberation Sans',sans-serif;font-size:23.0px;line-height:30px;color:#757575;font-weight:400;letter-spacing:0.737px;">Topic Filters</span>
<span class="t" id="t47" style="left:14px;top:144.50px;font-family:'Liberation Sans',sans-serif;font-size:21.0px;line-height:28px;color:rgba(255,255,255,0.68);font-weight:400;letter-spacing:0.807px;">Wednesday</span>
<span class="t" id="t48" style="left:14px;top:175.00px;font-family:'Liberation Sans',sans-serif;font-size:21.0px;line-height:28px;color:rgba(255,255,255,0.68);font-weight:400;letter-spacing:1.774px;">02/18/2026</span>
<span class="t" id="t49" style="left:14px;top:206.50px;font-family:'Liberation Sans',sans-serif;font-size:21.0px;line-height:28px;color:rgba(255,255,255,0.68);font-weight:400;letter-spacing:-0.022px;">9:22 PM GMT</span>
<div class="tc" style="left:-320px;top:327.00px;"><span id="t50" style="font-family:'Liberation Sans',sans-serif;font-size:19.0px;line-height:25px;color:rgba(255,255,255,0.87);font-weight:400;letter-spacing:0.500px;">General</span></div>
<div class="tc" style="left:-320px;top:351.00px;"><span id="t51" style="font-family:'Liberation Sans',sans-serif;font-size:19.0px;line-height:25px;color:rgba(255,255,255,0.87);font-weight:400;letter-spacing:1.183px;">overview</span></div>
<div class="tc" style="left:-320px;top:455.00px;"><span id="t52" style="font-family:'Liberation Sans',sans-serif;font-size:19.0px;line-height:25px;color:rgba(255,255,255,0.87);font-weight:400;letter-spacing:0.772px;">Site overview</span></div>
<div class="tc" style="left:-320px;top:559.00px;"><span id="t53" style="font-family:'Liberation Sans',sans-serif;font-size:19.0px;line-height:25px;color:rgba(255,255,255,0.87);font-weight:400;letter-spacing:0.609px;">Device details</span></div>
<div class="tc" style="left:-320px;top:663.00px;"><span id="t54" style="font-family:'Liberation Sans',sans-serif;font-size:19.0px;line-height:25px;color:rgba(255,255,255,0.87);font-weight:400;letter-spacing:0.839px;">Active alarms</span></div>
<div class="tc" style="left:-320px;top:767.00px;"><span id="t55" style="font-family:'Liberation Sans',sans-serif;font-size:19.0px;line-height:25px;color:rgba(255,255,255,0.87);font-weight:400;letter-spacing:0.747px;">Events</span></div>
<div class="tc" style="left:-320px;top:871.00px;"><span id="t56" style="font-family:'Liberation Sans',sans-serif;font-size:19.0px;line-height:25px;color:rgba(255,255,255,0.87);font-weight:400;letter-spacing:0.883px;">Configuration</span></div>
<div class="tc" style="left:-318px;top:975.00px;"><span id="t57" style="font-family:'Liberation Sans',sans-serif;font-size:19.0px;line-height:25px;color:rgba(255,255,255,0.87);font-weight:400;letter-spacing:1.148px;">Administration</span></div>
<div class="tc" style="left:-320px;top:1089.00px;"><span id="t58" style="font-family:'Liberation Sans',sans-serif;font-size:19.0px;line-height:25px;color:rgba(255,255,255,0.87);font-weight:400;letter-spacing:0.911px;">Data</span></div>
<div class="tc" style="left:-320px;top:1113.00px;"><span id="t59" style="font-family:'Liberation Sans',sans-serif;font-size:19.0px;line-height:25px;color:rgba(255,255,255,0.87);font-weight:400;letter-spacing:1.194px;">integration</span></div>
<div class="tc" style="left:-320px;top:1217.00px;"><span id="t60" style="font-family:'Liberation Sans',sans-serif;font-size:19.0px;line-height:25px;color:rgba(255,255,255,0.87);font-weight:400;letter-spacing:0.300px;">Access</span></div>
<div class="tc" style="left:-320px;top:1241.00px;"><span id="t61" style="font-family:'Liberation Sans',sans-serif;font-size:19.0px;line-height:25px;color:rgba(255,255,255,0.87);font-weight:400;letter-spacing:1.057px;">management</span></div>
<div class="tc" style="left:-320px;top:1345.00px;"><span id="t62" style="font-family:'Liberation Sans',sans-serif;font-size:19.0px;line-height:25px;color:rgba(255,255,255,0.87);font-weight:400;letter-spacing:0.951px;">Analytics</span></div>
<div class="tc" style="left:-320px;top:1449.00px;"><span id="t63" style="font-family:'Liberation Sans',sans-serif;font-size:19.0px;line-height:25px;color:rgba(255,255,255,0.87);font-weight:400;letter-spacing:1.420px;">Platform</span></div>
<div class="tc" style="left:-320px;top:1473.00px;"><span id="t64" style="font-family:'Liberation Sans',sans-serif;font-size:19.0px;line-height:25px;color:rgba(255,255,255,0.87);font-weight:400;letter-spacing:1.057px;">management</span></div>
<div class="tc" style="left:-320px;top:1577.00px;"><span id="t65" style="font-family:'Liberation Sans',sans-serif;font-size:19.0px;line-height:25px;color:rgba(255,255,255,0.87);font-weight:400;letter-spacing:0.770px;">Event</span></div>
<span class="t" id="t66" style="left:274px;top:41.00px;font-family:'Liberation Sans',sans-serif;font-size:38.5px;line-height:51px;color:#212121;font-weight:400;letter-spacing:1.610px;">Data integration</span>
<span class="t" id="t67" style="left:638px;top:41.00px;font-family:'Liberation Sans',sans-serif;font-size:38.5px;line-height:51px;color:#212121;font-weight:400;letter-spacing:0.929px;">Data sources</span>
<div class="tc" style="left:1928.3000000000002px;top:76.10px;"><span id="t68" style="font-family:'Liberation Sans',sans-serif;font-size:17.5px;line-height:23px;color:#fff;font-weight:400;letter-spacing:0.000px;">4</span></div>
<div class="tc" style="left:2088px;top:39.20px;"><span id="t69" style="font-family:'Liberation Sans',sans-serif;font-size:38.5px;line-height:51px;color:#fcfcfc;font-weight:400;letter-spacing:0.000px;-webkit-text-stroke:0.8px #fcfcfc;">?</span></div>
</div>
</div>
<script>(function(){var w=window.innerWidth||2560;if(w&&Math.abs(w-2560)>1){var r=document.getElementById("root");r.style.transformOrigin="0 0";r.style.transform="scale("+(w/2560)+")";document.body.style.width=w+"px";document.body.style.height=(1600*w/2560)+"px";}})();</script>
</body></html>
